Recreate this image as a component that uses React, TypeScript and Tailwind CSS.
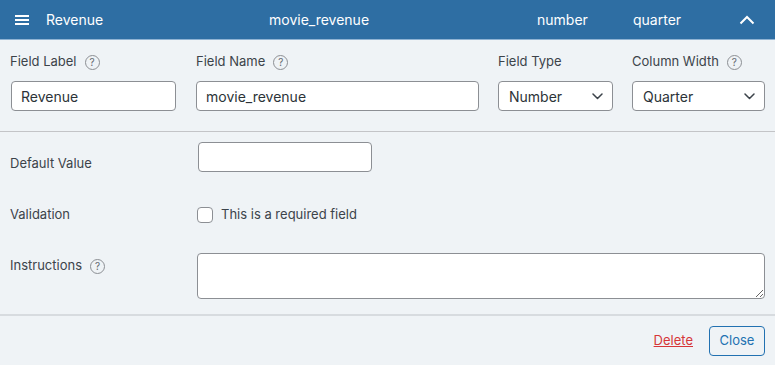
import React from "react";

function HelpIcon() {
  return (
    <span className="inline-flex items-center justify-center w-[15px] h-[15px] rounded-full border border-[#8c8f94] text-[10px] leading-none text-[#646970]">
      ?
    </span>
  );
}

function Chevron() {
  return (
    <svg width="11" height="7" viewBox="0 0 11 7" fill="none" className="shrink-0">
      <path d="M1 1l4.5 4.5L10 1" stroke="#3c434a" strokeWidth="1.5" strokeLinecap="round" strokeLinejoin="round" />
    </svg>
  );
}

function SelectBox({ value, width }: { value: string; width: string }) {
  return (
    <div className={`${width} h-[30px] flex items-center justify-between pl-[10px] pr-[9px] bg-white border border-[#8c8f94] rounded-[4px] text-[14px] text-[#2c3338]`}>
      <span>{value}</span>
      <Chevron />
    </div>
  );
}

export default function App() {
  return (
    <div className="w-[775px] h-[365px] bg-[#eff3f6] text-[#3c434a] overflow-hidden" style={{ fontFamily: "Inter, 'Noto Sans', sans-serif" }}>
      {/* header bar */}
      <div className="h-[40px] bg-[#2e6ea3] border-b border-[#8fb3d3] flex items-center text-white text-[14px]">
        <svg width="14" height="10" viewBox="0 0 14 10" className="ml-[15px] mr-[17px]">
          <rect y="0" width="14" height="2" fill="white" />
          <rect y="4" width="14" height="2" fill="white" />
          <rect y="8" width="14" height="2" fill="white" />
        </svg>
        <span className="w-[223px]">Revenue</span>
        <span className="w-[268px]">movie_revenue</span>
        <span className="w-[96px]">number</span>
        <span className="w-[106px]">quarter</span>
        <svg width="16" height="10" viewBox="0 0 16 10" fill="none">
          <path d="M1.5 8.5L8 2l6.5 6.5" stroke="white" strokeWidth="2" />
        </svg>
      </div>

      {/* top settings */}
      <div className="flex gap-[20px] px-[10px] pt-[12px] pb-[20px] border-b border-[#c3c4c7]">
        <div className="w-[166px]">
          <div className="h-[20px] flex items-center gap-[8px] text-[13px]">
            Field Label <HelpIcon />
          </div>
          <input readOnly value="Revenue" className="mt-[9px] ml-[1px] w-[165px] h-[30px] px-[9px] bg-white border border-[#8c8f94] rounded-[4px] text-[14px] text-[#2c3338] outline-none" />
        </div>
        <div className="w-[282px]">
          <div className="h-[20px] flex items-center gap-[8px] text-[13px]">
            Field Name <HelpIcon />
          </div>
          <input readOnly value="movie_revenue" className="mt-[9px] w-[283px] h-[30px] px-[9px] bg-white border border-[#8c8f94] rounded-[4px] text-[14px] text-[#2c3338] outline-none" />
        </div>
        <div className="w-[114px]">
          <div className="h-[20px] flex items-center text-[13px]">Field Type</div>
          <div className="mt-[9px]">
            <SelectBox value="Number" width="w-[115px]" />
          </div>
        </div>
        <div className="w-[133px]">
          <div className="h-[20px] flex items-center gap-[8px] text-[13px]">
            Column Width <HelpIcon />
          </div>
          <div className="mt-[9px]">
            <SelectBox value="Quarter" width="w-[133px]" />
          </div>
        </div>
      </div>

      {/* lower settings */}
      <div className="px-[10px] pt-[10px] pb-[15px] border-b-2 border-[#d7dbdf]">
        <div className="flex">
          <div className="w-[188px] pt-[11px] h-[30px] text-[13px] leading-[20px]">Default Value</div>
          <input readOnly className="w-[174px] h-[30px] bg-white border border-[#8c8f94] rounded-[4px] outline-none" />
        </div>
        <div className="flex items-center mt-[33px] h-[20px]">
          <div className="w-[187px] text-[13px]">Validation</div>
          <label className="flex items-center gap-[8px] text-[13px]">
            <span className="w-[16px] h-[16px] bg-white border border-[#8c8f94] rounded-[4px]" />
            This is a required field
          </label>
        </div>
        <div className="flex mt-[28px]">
          <div className="w-[187px] pt-[2px] h-[20px] flex items-center gap-[8px] text-[13px] mt-[2px]">
            Instructions <HelpIcon />
          </div>
          <textarea readOnly className="flex-1 h-[46px] bg-white border border-[#8c8f94] rounded-[4px] outline-none" />
        </div>
      </div>

      {/* footer */}
      <div className="flex items-center justify-end gap-[16px] px-[10px] pt-[10px]">
        <a href="#" className="text-[13px] text-[#d63638] underline">Delete</a>
        <button className="h-[30px] w-[56px] border border-[#2271b1] rounded-[4px] text-[13px] text-[#2271b1] bg-transparent">
          Close
        </button>
      </div>
    </div>
  );
}
